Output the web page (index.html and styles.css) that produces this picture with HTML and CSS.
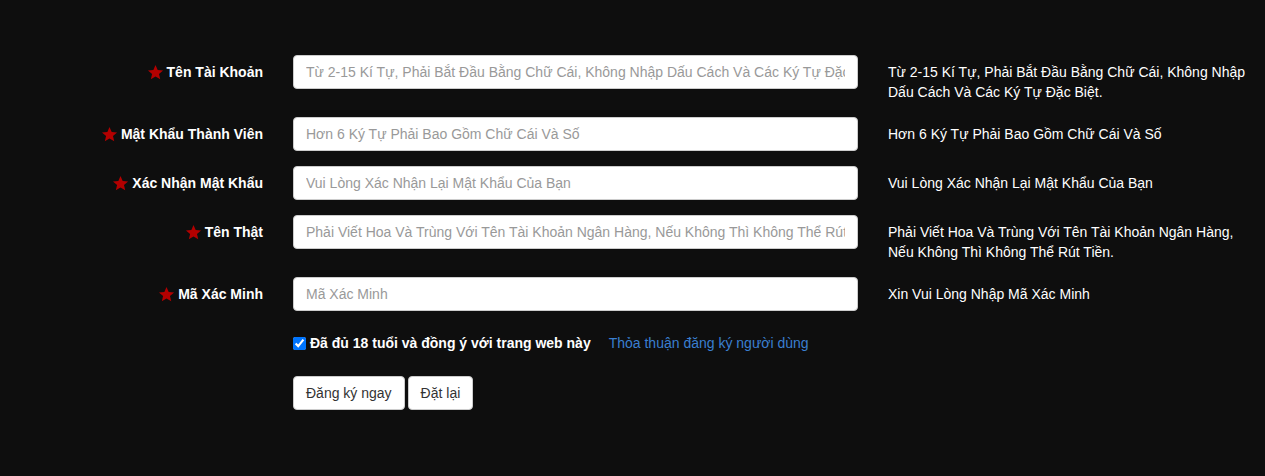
FILE: index.html
```html
<!DOCTYPE html>
<html lang="vi">
<head>
<meta charset="utf-8">
<title>Đăng ký</title>
<link rel="stylesheet" href="styles.css">
</head>
<body>
<form class="reg-form">
  <div class="row">
    <label class="ctl-label"><svg class="star" viewBox="0 0 24 24"><path d="M12 1.5l3.1 7.1 7.6.6-5.8 5 1.8 7.5L12 17.7l-6.6 4 1.8-7.5-5.8-5 7.6-.6z"/></svg>Tên Tài Khoản</label>
    <div class="ctl"><input class="input" type="text" placeholder="Từ 2-15 Kí Tự, Phải Bắt Đầu Bằng Chữ Cái, Không Nhập Dấu Cách Và Các Ký Tự Đặc Biệt."></div>
    <div class="help">Từ 2-15 Kí Tự, Phải Bắt Đầu Bằng Chữ Cái, Không Nhập Dấu Cách Và Các Ký Tự Đặc Biệt.</div>
  </div>
  <div class="row">
    <label class="ctl-label"><svg class="star" viewBox="0 0 24 24"><path d="M12 1.5l3.1 7.1 7.6.6-5.8 5 1.8 7.5L12 17.7l-6.6 4 1.8-7.5-5.8-5 7.6-.6z"/></svg>Mật Khẩu Thành Viên</label>
    <div class="ctl"><input class="input" type="password" placeholder="Hơn 6 Ký Tự Phải Bao Gồm Chữ Cái Và Số"></div>
    <div class="help">Hơn 6 Ký Tự Phải Bao Gồm Chữ Cái Và Số</div>
  </div>
  <div class="row">
    <label class="ctl-label"><svg class="star" viewBox="0 0 24 24"><path d="M12 1.5l3.1 7.1 7.6.6-5.8 5 1.8 7.5L12 17.7l-6.6 4 1.8-7.5-5.8-5 7.6-.6z"/></svg>Xác Nhận Mật Khẩu</label>
    <div class="ctl"><input class="input" type="password" placeholder="Vui Lòng Xác Nhận Lại Mật Khẩu Của Bạn"></div>
    <div class="help">Vui Lòng Xác Nhận Lại Mật Khẩu Của Bạn</div>
  </div>
  <div class="row">
    <label class="ctl-label"><svg class="star" viewBox="0 0 24 24"><path d="M12 1.5l3.1 7.1 7.6.6-5.8 5 1.8 7.5L12 17.7l-6.6 4 1.8-7.5-5.8-5 7.6-.6z"/></svg>Tên Thật</label>
    <div class="ctl"><input class="input" type="text" placeholder="Phải Viết Hoa Và Trùng Với Tên Tài Khoản Ngân Hàng, Nếu Không Thì Không Thể Rút Tiền."></div>
    <div class="help">Phải Viết Hoa Và Trùng Với Tên Tài Khoản Ngân Hàng, Nếu Không Thì Không Thể Rút Tiền.</div>
  </div>
  <div class="row">
    <label class="ctl-label"><svg class="star" viewBox="0 0 24 24"><path d="M12 1.5l3.1 7.1 7.6.6-5.8 5 1.8 7.5L12 17.7l-6.6 4 1.8-7.5-5.8-5 7.6-.6z"/></svg>Mã Xác Minh</label>
    <div class="ctl"><input class="input" type="text" placeholder="Mã Xác Minh"></div>
    <div class="help">Xin Vui Lòng Nhập Mã Xác Minh</div>
  </div>
  <div class="row agree-row">
    <div class="ctl-label"></div>
    <div class="agree">
      <label class="check"><input type="checkbox" checked>Đã đủ 18 tuổi và đồng ý với trang web này</label>
      <a class="terms" href="#">Thỏa thuận đăng ký người dùng</a>
    </div>
  </div>
  <div class="row">
    <div class="ctl-label"></div>
    <div class="actions">
      <button type="button" class="btn">Đăng ký ngay</button>
      <button type="reset" class="btn">Đặt lại</button>
    </div>
  </div>
</form>
</body>
</html>
```
FILE: styles.css
```css
html, body {
  margin: 0;
  background: #0e0e0e;
}
body {
  font-family: "Liberation Sans", Arial, sans-serif;
  font-size: 14px;
  line-height: 20px;
  color: #fff;
  height: 476px;
}
.reg-form {
  padding-top: 55px;
}
.row {
  display: flex;
  align-items: flex-start;
  margin-bottom: 15px;
}
.ctl-label {
  width: 263px;
  flex: none;
  padding-top: 7px;
  text-align: right;
  font-weight: bold;
  color: #fff;
  display: flex;
  justify-content: flex-end;
  align-items: center;
  height: 20px;
}
.star {
  width: 17px;
  height: 17px;
  fill: #b30000;
  margin-right: 3px;
  flex: none;
}
.ctl {
  width: 565px;
  margin-left: 30px;
  flex: none;
}
.input {
  display: block;
  box-sizing: border-box;
  width: 100%;
  height: 34px;
  padding: 6px 12px;
  font-family: inherit;
  font-size: 14px;
  line-height: 20px;
  color: #555;
  background: #fff;
  border: 1px solid #ccc;
  border-radius: 4px;
  outline: none;
}
.input::placeholder {
  color: #999;
}
.help {
  margin-left: 30px;
  width: 362px;
  padding-top: 7px;
  color: #fff;
}
.agree-row {
  margin-top: 17px;
  margin-bottom: 0;
}
.agree {
  margin-left: 30px;
  display: flex;
  align-items: center;
  height: 30px;
}
.check {
  display: flex;
  align-items: center;
  font-weight: bold;
  color: #fff;
}
.check input {
  margin: 0 4px 0 0;
  width: 13px;
  height: 13px;
}
.terms {
  margin-left: 18px;
  color: #3a7fd0;
  text-decoration: none;
}
.actions {
  margin-left: 30px;
  margin-top: 18px;
  display: flex;
  gap: 3px;
}
.btn {
  box-sizing: border-box;
  height: 34px;
  padding: 6px 12px;
  font-family: inherit;
  font-size: 14px;
  line-height: 20px;
  color: #333;
  background: #fff;
  border: 1px solid #ccc;
  border-radius: 4px;
}
```
